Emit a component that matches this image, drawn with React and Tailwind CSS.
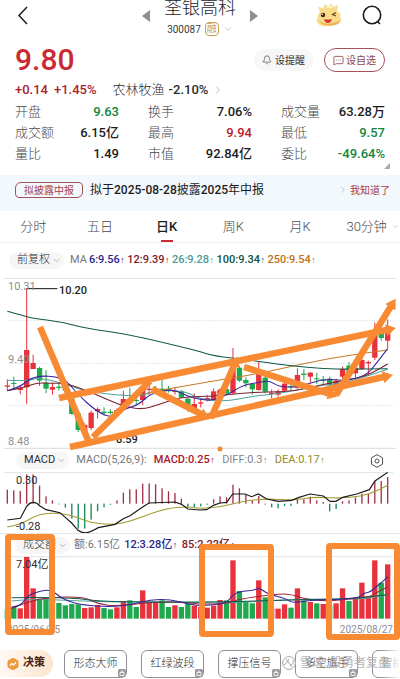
import { Bell, ChevronDown, ChevronRight, MessageSquareMore } from 'lucide-react';

const RED = '#e8323c';
const GREEN = '#1fa94f';
const ORANGE = '#f78a32';

const stats = [
  { label: '开盘', value: '9.63', color: 'text-[#12863f]' },
  { label: '换手', value: '7.06%', color: 'text-[#1c1c1e]' },
  { label: '成交量', value: '63.28万', color: 'text-[#1c1c1e]' },
  { label: '成交额', value: '6.15亿', color: 'text-[#1c1c1e]' },
  { label: '最高', value: '9.94', color: 'text-[#b8202c]' },
  { label: '最低', value: '9.57', color: 'text-[#12863f]' },
  { label: '量比', value: '1.49', color: 'text-[#1c1c1e]' },
  { label: '市值', value: '92.84亿', color: 'text-[#1c1c1e]' },
  { label: '委比', value: '-49.64%', color: 'text-[#12863f]' },
];

const tabs = ['分时', '五日', '日K', '周K', '月K', '30分钟'];
const tools = ['形态大师', '红绿波段', '撑压信号', '多空旗手', '智能选股'];

// [up, high, open/close top, open/close bottom, low]
const candles = [
  [1, 328, 346, 350, 362], [0, 320, 339, 342, 360], [1, 345, 354, 360, 373], [1, 55, 240, 352, 402],
  [1, 254, 279, 297, 297], [0, 290, 294, 332, 348], [0, 300, 338, 356, 370], [1, 338, 351, 359, 374],
  [0, 338, 350, 354, 362], [0, 345, 350, 362, 385], [0, 380, 385, 432, 434], [0, 428, 430, 480, 486],
  [1, 460, 465, 490, 505], [1, 422, 428, 474, 480], [1, 412, 417, 424, 446], [0, 412, 425, 429, 437],
  [0, 418, 425, 429, 433], [1, 415, 420, 435, 438], [1, 362, 387, 410, 415], [0, 353, 386, 390, 400],
  [0, 378, 390, 393, 405], [1, 345, 350, 390, 405], [1, 338, 356, 360, 375], [0, 348, 356, 360, 368],
  [0, 330, 356, 362, 368], [0, 348, 356, 360, 368], [1, 352, 362, 366, 374], [0, 360, 364, 382, 385],
  [0, 384, 386, 418, 425], [1, 370, 402, 420, 425], [1, 388, 397, 401, 412], [1, 376, 384, 390, 394],
  [1, 355, 364, 390, 392], [1, 355, 359, 375, 378], [0, 352, 357, 370, 374], [1, 234, 290, 370, 372],
  [0, 288, 293, 332, 336], [0, 322, 330, 340, 352], [0, 340, 342, 358, 374], [1, 276, 305, 360, 362],
  [0, 308, 323, 365, 370], [1, 358, 368, 372, 385], [1, 358, 364, 374, 380], [1, 337, 341, 362, 366],
  [0, 342, 348, 352, 360], [1, 295, 315, 354, 356], [0, 297, 311, 315, 330], [1, 306, 308, 320, 338],
  [0, 308, 325, 328, 342], [0, 318, 328, 332, 344], [0, 320, 326, 346, 350], [1, 326, 332, 350, 352],
  [1, 290, 297, 320, 330], [0, 276, 287, 315, 320], [1, 280, 294, 310, 322], [1, 246, 270, 297, 300],
  [1, 272, 276, 280, 312], [1, 158, 190, 263, 270], [0, 180, 185, 204, 212], [1, 148, 185, 212, 235],
];

const macd = [
  118, 120, 122, 72, 72, 106, 138, 150, 162, 172, 205, 235, 235, 208, 183, 171, 163, 150, 127, 117,
  117, 100, 99, 102, 114, 123, 128, 145, 172, 170, 168, 163, 147, 138, 141, 103, 114, 133, 150, 137,
  163, 171, 174, 167, 167, 147, 147, 139, 150, 155, 183, 176, 153, 150, 141, 130, 131, 92, 92, 80,
];

const volumes = [
  [0, 238], [0, 230], [1, 234], [1, 80], [1, 174], [0, 205], [0, 203], [0, 200], [0, 218], [0, 225],
  [0, 221], [0, 222], [1, 233], [1, 231], [1, 224], [0, 233], [0, 237], [1, 231], [1, 212], [0, 210],
  [0, 230], [1, 180], [1, 216], [1, 216], [0, 210], [0, 230], [1, 225], [0, 230], [0, 220], [1, 226],
  [1, 230], [1, 232], [1, 226], [1, 209], [0, 210], [1, 90], [0, 182], [0, 215], [0, 219], [1, 150],
  [0, 201], [1, 232], [1, 235], [1, 222], [0, 232], [1, 174], [0, 210], [1, 215], [0, 219], [1, 221],
  [0, 225], [1, 219], [1, 174], [0, 212], [1, 206], [1, 157], [1, 200], [1, 90], [0, 157], [1, 102],
];

const barX = (i) => 22 + i * 19.34;

// smooth line through the given points
function curve(points) {
  const p = points.split(' ').map((s) => s.split(',').map(Number));
  let d = `M${p[0][0]} ${p[0][1]}`;
  for (let i = 1; i < p.length - 1; i++) {
    d += ` Q${p[i][0]} ${p[i][1]} ${(p[i][0] + p[i + 1][0]) / 2} ${(p[i][1] + p[i + 1][1]) / 2}`;
  }
  return `${d} L${p[p.length - 1][0]} ${p[p.length - 1][1]}`;
}

function Line({ points, color }) {
  return <path d={curve(points)} fill="none" stroke={color} strokeWidth="3.200" />;
}

function PriceChart() {
  return (
    <svg className="block h-[171px] w-full" viewBox="0 24 1200 513" preserveAspectRatio="none" aria-hidden="true">
      <path d="M12 25H1188M12 535H1188" stroke="#e2e2e4" strokeWidth="4" />
      <path d="M22 152H1180M22 280H1180M22 406H1180" stroke="#e3e3e5" strokeWidth="3" strokeDasharray="4 3" />
      {candles.map(([up, high, top, bottom, low], i) => (
        <g key={i} fill={up ? RED : GREEN}>
          <rect x={barX(i) - 1.5} y={high} width="3" height={low - high} />
          <rect x={barX(i) - 8} y={top} width="16" height={bottom - top} />
        </g>
      ))}
      <Line color="#4fa39d" points="22,331 90,333 110,322 190,340 250,362 340,375 420,378 480,360 560,365 600,388 680,395 760,378 830,372 950,348 1040,338 1100,318 1163,298" />
      <Line color="#c77a2c" points="440,370 500,358 600,340 640,333 770,312 900,283 1020,260 1163,240" />
      <Line color="#7d2230" points="22,362 80,350 110,338 150,340 200,340 280,370 330,392 380,412 430,418 480,402 540,382 600,380 640,378 720,370 800,365 880,365 960,345 1040,330 1100,318 1163,282" />
      <Line color="#3a249c" points="22,362 60,352 100,317 190,320 230,370 290,425 340,445 375,415 415,405 450,372 500,360 530,362 560,378 600,388 640,392 690,370 730,345 790,335 810,333 840,352 900,350 970,326 1040,333 1100,315 1125,285 1163,236" />
      <Line color="#12594a" points="22,124 80,140 100,145 180,155 265,176 375,191 520,225 600,245 640,258 750,270 830,282 920,293 1020,298 1163,296" />
      <path d="M80 56H172" stroke="#111" strokeWidth="3" />
    </svg>
  );
}

function MacdChart() {
  return (
    <svg className="block h-[61px] w-full" viewBox="0 65 1200 183" preserveAspectRatio="none" aria-hidden="true">
      <path d="M12 67H1180" stroke="#e2e2e4" strokeWidth="3" />
      {macd.map((y, i) => (
        <rect
          key={i}
          x={barX(i) - 2}
          y={Math.min(y, 160)}
          width="4"
          height={Math.abs(160 - y)}
          fill={y < 160 ? '#a3304a' : '#178a5a'}
        />
      ))}
      <Line color="#a39a32" points="22,230 61,222 100,200 130,190 180,188 230,200 270,217 340,224 400,210 450,190 500,175 560,168 600,175 660,170 700,160 740,151 800,145 880,150 940,140 1000,143 1050,142 1110,132 1163,105" />
      <path
        d="M22 209L61 204L80 168Q99 145 120 167L138 178L180 187L215 218L234 240Q254 255 280 240L295 232L345 222L370 205L390 196L428 170L447 158L525 155L545 162L563 176L600 179L620 178L640 165L660 158L680 156L698 131L735 131L755 139L775 131L800 146L835 153L875 150L895 142L930 131L970 137L990 153L1008 153L1028 141L1070 131L1108 118L1125 92L1163 66"
        fill="none"
        stroke="#1a1a1a"
        strokeWidth="3.500"
      />
    </svg>
  );
}

function VolumeChart() {
  return (
    <svg className="block h-[63px] w-full" viewBox="0 77 1200 189" preserveAspectRatio="none" aria-hidden="true">
      <path d="M12 79H1180" stroke="#e2e2e4" strokeWidth="3" />
      {volumes.map(([up, y], i) => (
        <rect key={i} x={barX(i) - 8} y={y} width="16" height={265 - y} fill={up ? RED : GREEN} />
      ))}
      <Line color="#4fa39d" points="35,212 100,205 250,213 400,215 600,217 700,218 850,208 1000,206 1100,206 1163,193" />
      <Line color="#a02535" points="35,235 80,215 150,200 255,200 290,220 350,228 450,215 550,215 600,222 680,220 720,205 840,190 880,193 910,205 980,213 1060,205 1110,200 1140,180 1163,170" />
      <Line color="#12594a" points="35,202 200,200 300,213 450,215 600,215 740,213 900,208 1050,205 1163,193" />
      <Line color="#3a249c" points="35,230 61,228 80,200 100,188 150,176 180,200 210,215 250,224 330,230 400,222 450,208 510,207 560,220 600,227 680,220 698,192 730,181 760,181 778,171 800,190 860,205 875,218 930,210 990,208 1050,205 1080,200 1090,188 1110,186 1140,160 1163,140" />
    </svg>
  );
}

// hand-drawn trend lines and boxes lying over all three charts
function Drawings() {
  return (
    <svg className="pointer-events-none absolute inset-0 h-full w-full" viewBox="0 243 400 400" preserveAspectRatio="none" aria-hidden="true">
      <defs>
        <marker id="head" markerUnits="userSpaceOnUse" markerWidth="12" markerHeight="12" refX="6" refY="6" orient="auto">
          <path d="M1 0L11 6L1 12Z" fill={ORANGE} />
        </marker>
      </defs>
      <g fill="none" stroke={ORANGE} strokeWidth="6.500">
        <path d="M40 327L88 440" />
        <path d="M93 437L150 381" />
        <path d="M152 389L205 416" markerEnd="url(#head)" />
        <path d="M211 418L236 361" markerEnd="url(#head)" />
        <path d="M244 367L333 395" markerEnd="url(#head)" />
        <path d="M336 395L393 303" markerEnd="url(#head)" />
        <path d="M59 398L391 329" markerEnd="url(#head)" />
        <path d="M70 447L388 376" markerEnd="url(#head)" />
      </g>
      <g fill="none" stroke={ORANGE} strokeWidth="6">
        <rect x="8" y="537" width="44" height="95" rx="1" />
        <rect x="202" y="547" width="69" height="87" rx="1" />
        <rect x="329" y="546" width="68" height="91" rx="1" />
      </g>
      <circle cx="220" cy="449" r="2.500" fill={ORANGE} />
    </svg>
  );
}

function Dragon() {
  return (
    <svg className="h-6 w-7" viewBox="0 0 28 24" aria-hidden="true">
      <path d="M5 9L3 4L8 5L10 1L13 4L16 0L18 4L23 2L22 8Q27 11 25 14Q28 17 24 20Q19 24 13 23Q5 24 3 20Q0 17 3 15Q2 11 5 9Z" fill="#f9dc8c" />
      <path d="M11 5L13 3L16 2L17 5Z" fill="#fff0c2" />
      <path d="M4 18Q13 24 25 17Q25 21 20 22Q8 24 4 18Z" fill="#efb25c" />
      <circle cx="8" cy="12" r="2.300" fill="#4b2d17" />
      <circle cx="7.300" cy="11.200" r="0.800" fill="#fff" />
      <path d="M21 9.500L17.500 11.500L21 13" fill="none" stroke="#6a421d" strokeWidth="1.200" />
      <path d="M9 16Q13 17 17 16Q16 20 13 20Q10 20 9 16Z" fill="#d8362e" />
    </svg>
  );
}

function Header() {
  return (
    <header className="grid h-[42px] grid-cols-[1fr_auto_1fr] items-start px-4">
      <button className="mt-1 -ml-0.5 w-6" aria-label="返回">
        <svg className="h-6 w-6" viewBox="0 0 24 24" fill="none" stroke="#1c1c1e" strokeWidth="1.500">
          <path d="M13 3L5 11.500L13 20" />
        </svg>
      </button>
      <div className="flex items-start gap-[14px]">
        <button className="mt-[10px]" aria-label="上一只">
          <svg className="block h-3 w-2" viewBox="0 0 8 12"><path d="M8 0V12L0 6Z" fill="#8e8e90" /></svg>
        </button>
        <div className="-mt-1 flex flex-col items-center">
          <h1 className="text-[18px] leading-6 font-light whitespace-nowrap text-[#1c1c1e]">荃银高科</h1>
          <div className="flex h-[18px] items-center gap-1 text-[10px] text-[#3c3c40]">
            <span>300087</span>
            <span className="flex h-[14px] w-[14px] items-center justify-center rounded-sm border border-[#c9a04e] leading-3 text-[#c9a04e]">融</span>
            <ChevronDown size={10} strokeWidth={1.5} color="#aaa" />
          </div>
        </div>
        <button className="mt-[10px]" aria-label="下一只">
          <svg className="block h-3 w-2" viewBox="0 0 8 12"><path d="M0 0V12L8 6Z" fill="#8e8e90" /></svg>
        </button>
      </div>
      <div className="mt-[3px] flex items-center justify-end gap-[17px]">
        <Dragon />
        <button aria-label="搜索">
          <svg className="block h-6 w-6" viewBox="0 0 24 24" fill="none" stroke="#1c1c1e" strokeWidth="1.600">
            <circle cx="12" cy="12" r="8.700" />
            <path d="M17.500 18.500L20 21" />
          </svg>
        </button>
      </div>
    </header>
  );
}

function Quote() {
  return (
    <section className="px-[15px]">
      <div className="flex h-[36px] items-center justify-between">
        <div className="text-[30px] leading-8 font-medium text-[#cb2a34]">9.80</div>
        <div className="flex items-center gap-[11px] text-[10px]">
          <button className="flex h-[22px] items-center gap-[3px] rounded-full bg-[#f7f7f8] px-2 text-[#333]">
            <Bell size={10} strokeWidth={1.5} />
            设提醒
          </button>
          <button className="flex h-6 items-center gap-[2px] rounded-full border border-[#a3525c] px-2 text-[#8f4450]">
            <MessageSquareMore size={11} strokeWidth={1.8} />
            设自选
          </button>
        </div>
      </div>
      <div className="mt-px flex h-[22px] items-center text-[13px]">
        <span className="font-medium text-[#a8232f]">+0.14</span>
        <span className="ml-[6px] font-medium text-[#a8232f]">+1.45%</span>
        <a href="#" className="ml-4 flex items-center gap-1">
          <span className="font-light">农林牧渔</span>
          <span className="font-medium">-2.10%</span>
          <ChevronRight size={12} strokeWidth={1.3} color="#999" />
        </a>
      </div>
      <dl className="grid grid-cols-3 gap-x-[29px] pb-[11px]">
        {stats.map((s) => (
          <div key={s.label} className="flex h-[21px] items-center justify-between">
            <dt className="text-[13px] font-light text-[#48484c]">{s.label}</dt>
            <dd className={`text-[13px] font-medium ${s.color}`}>{s.value}</dd>
          </div>
        ))}
      </dl>
    </section>
  );
}

function Pill({ children }) {
  return (
    <button className="flex h-[17px] items-center gap-[2px] rounded-full bg-[#f6f6f7] pr-[3px] pl-2 text-[11px]">
      {children}
      <ChevronDown size={9} strokeWidth={1.5} color="#888" />
    </button>
  );
}

function Rise({ className, children }) {
  return (
    <span className={className}>
      {children}
      <span className="font-['Liberation_Mono',monospace] text-[9px] leading-none">↑</span>
    </span>
  );
}

export default function App() {
  return (
    <main className="w-full overflow-hidden bg-white font-[Roboto,'Noto_Sans_CJK_SC',sans-serif] text-[#2c2c2e]">
      <Header />
      <Quote />

      <div className="relative flex h-[36px] items-start bg-[#f3f8fd] px-[15px] pt-[7px] text-[12px]">
        <svg className="absolute -top-3 right-[10px] h-[6px] w-[6px]" viewBox="0 0 6 6" aria-hidden="true">
          <path d="M6 0V6H0Z" fill="#a9a9ab" />
        </svg>
        <span className="flex h-4 w-[68px] items-center justify-center rounded-tl-md rounded-tr-sm rounded-br-md rounded-bl-sm border border-[#a3525c] text-[10px] text-[#a3404c]">
          拟披露中报
        </span>
        <span className="ml-[7px] leading-4 font-medium whitespace-nowrap text-[#1c1c1e]">
          <span className="font-normal">拟于</span>2025-08-28<span className="font-normal">披露</span>2025<span className="font-normal">年中报</span>
        </span>
        <button className="-mr-[5px] ml-auto flex h-4 items-center gap-[2px] text-[10px] text-[#a3404c]">
          <ChevronRight size={10} strokeWidth={1.3} color="#999" />
          我知道了
        </button>
      </div>

      <nav className="grid h-8 grid-cols-6 border-b border-[#f1f1f2] text-[13px]">
        {tabs.map((tab) => (
          <button
            key={tab}
            className={`relative flex items-center justify-center whitespace-nowrap ${tab === '日K' ? 'font-medium text-[#1c1c1e]' : 'font-light text-[#4a4a4e]'}`}
          >
            {tab}
            {tab === '日K' && <span className="absolute bottom-0 h-[2px] w-3 bg-[#cb2a34]" />}
            {tab === '30分钟' && <ChevronDown className="absolute right-0" size={9} strokeWidth={1.3} color="#999" />}
          </button>
        ))}
      </nav>

      <section className="relative">
        <div className="flex h-[35px] items-center gap-[2px] pl-[9px] text-[11px] whitespace-nowrap">
          <Pill><span className="font-light">前复权</span></Pill>
          <span className="ml-1 text-[#77777b]">MA</span>
          <Rise className="font-medium text-[#2a1f8f]">6:9.56</Rise>
          <Rise className="font-medium text-[#7d1a28]">12:9.39</Rise>
          <Rise className="font-medium text-[#4b9a98]">26:9.28</Rise>
          <Rise className="font-medium text-[#0f5140]">100:9.34</Rise>
          <Rise className="font-medium text-[#c26f16]">250:9.54</Rise>
        </div>

        <div className="relative text-[11px] leading-3 text-[#8e8e92]">
          <PriceChart />
          <span className="absolute top-[3px] left-2">10.31</span>
          <span className="absolute top-[76px] left-2">9.40</span>
          <span className="absolute top-[158px] left-2">8.48</span>
          <span className="absolute top-[7px] left-[59px] font-medium text-[#1c1c1e]">10.20</span>
          <span className="absolute top-[156px] left-[116px] font-medium text-[#1c1c1e]">8.59</span>
        </div>

        <div className="flex h-[23px] items-center gap-[7px] pr-4 pl-4 text-[11px] whitespace-nowrap">
          <Pill>MACD</Pill>
          <span className="text-[#77777b]">MACD(5,26,9):</span>
          <Rise className="font-medium text-[#a8182c]">MACD:0.25</Rise>
          <Rise className="text-[#85858a]">DIFF:0.3</Rise>
          <Rise className="text-[#948b1e]">DEA:0.17</Rise>
          <button className="ml-auto" aria-label="指标设置">
            <svg className="block h-[14px] w-[14px]" viewBox="0 0 14 14" fill="none" stroke="#555" strokeWidth="1">
              <path d="M7 0.700L12.500 3.800V10.200L7 13.300L1.500 10.200V3.800Z" />
              <circle cx="7" cy="7" r="2" />
            </svg>
          </button>
        </div>

        <div className="relative text-[11px] leading-3 text-[#2c2c2e]">
          <MacdChart />
          <span className="absolute top-[3px] left-4">0.30</span>
          <span className="absolute top-[49px] left-4">-0.28</span>
        </div>

        <div className="flex h-[23px] items-center gap-1 border-t border-[#e6e6e8] pl-[15px] text-[11px] whitespace-nowrap">
          <Pill><span className="font-light">成交额</span></Pill>
          <span className="text-[#77777b]">额:6.15亿</span>
          <Rise className="font-medium text-[#2a1f8f]">12:3.28亿</Rise>
          <Rise className="font-medium text-[#7d1a28]">85:2.22亿</Rise>
        </div>

        <div className="relative text-[11px] leading-3 text-[#2c2c2e]">
          <VolumeChart />
          <span className="absolute top-[3px] left-4">7.04亿</span>
        </div>

        <div className="flex h-6 items-start justify-between pt-[3px] pr-[7px] pl-[7px] text-[10px] leading-4 text-[#8e8e92]">
          <span>2025/06/05</span>
          <span>2025/08/27</span>
        </div>
        <Drawings />
      </section>

      <footer className="relative flex h-9 items-start gap-[14px] overflow-hidden pt-[7px] text-[12px] whitespace-nowrap">
        <button className="-mr-[3px] flex h-[27px] w-[53px] shrink-0 items-center gap-1 rounded-r-full bg-linear-to-r from-[#fffaf5] to-[#fde4cd] pl-[7px] text-[11px] font-bold text-[#4a2313]">
          <svg className="h-3 w-3" viewBox="0 0 12 12" aria-hidden="true">
            <path d="M6 0L11 3V9L6 12L1 9V3Z" fill="#ef9b3b" stroke="#ef9b3b" strokeLinejoin="round" />
            <path d="M3 7.500L5 5.500L6.500 7L9 4.500" fill="none" stroke="#fff" strokeWidth="1.300" />
          </svg>
          决策
        </button>
        {tools.map((tool) => (
          <button key={tool} className="relative flex h-7 w-[63px] shrink-0 items-center justify-center rounded-md border border-[#8f8f93] text-[11px] font-light">
            {tool}
            <svg className="absolute right-0 bottom-0 h-2 w-2" viewBox="0 0 8 8" aria-hidden="true">
              <rect width="8" height="8" rx="1.500" fill="#9a9a9e" />
              <path d="M3 3.500V2.500Q4 1 5 2.500V3.500M2 3.500H6V6.500H2Z" fill="none" stroke="#fff" strokeWidth="0.800" />
            </svg>
          </button>
        ))}
        <div className="absolute inset-y-0 right-0 w-5 bg-linear-to-r from-transparent to-white" />
        <div className="absolute top-1 right-[10px] flex h-8 items-center gap-1 text-[12px] text-[#b4b4b8]">
          <svg className="h-[14px] w-[14px]" viewBox="0 0 14 14" fill="none" stroke="#a8a8ac" strokeWidth="1" aria-hidden="true">
            <circle cx="7" cy="7" r="6.400" fill="#fff" />
            <path d="M2 9Q5 8 7 3M4 3L10 11M8 9Q12 9 11 4" />
          </svg>
          <span>雪球: 股勇者复盘</span>
        </div>
      </footer>
    </main>
  );
}
